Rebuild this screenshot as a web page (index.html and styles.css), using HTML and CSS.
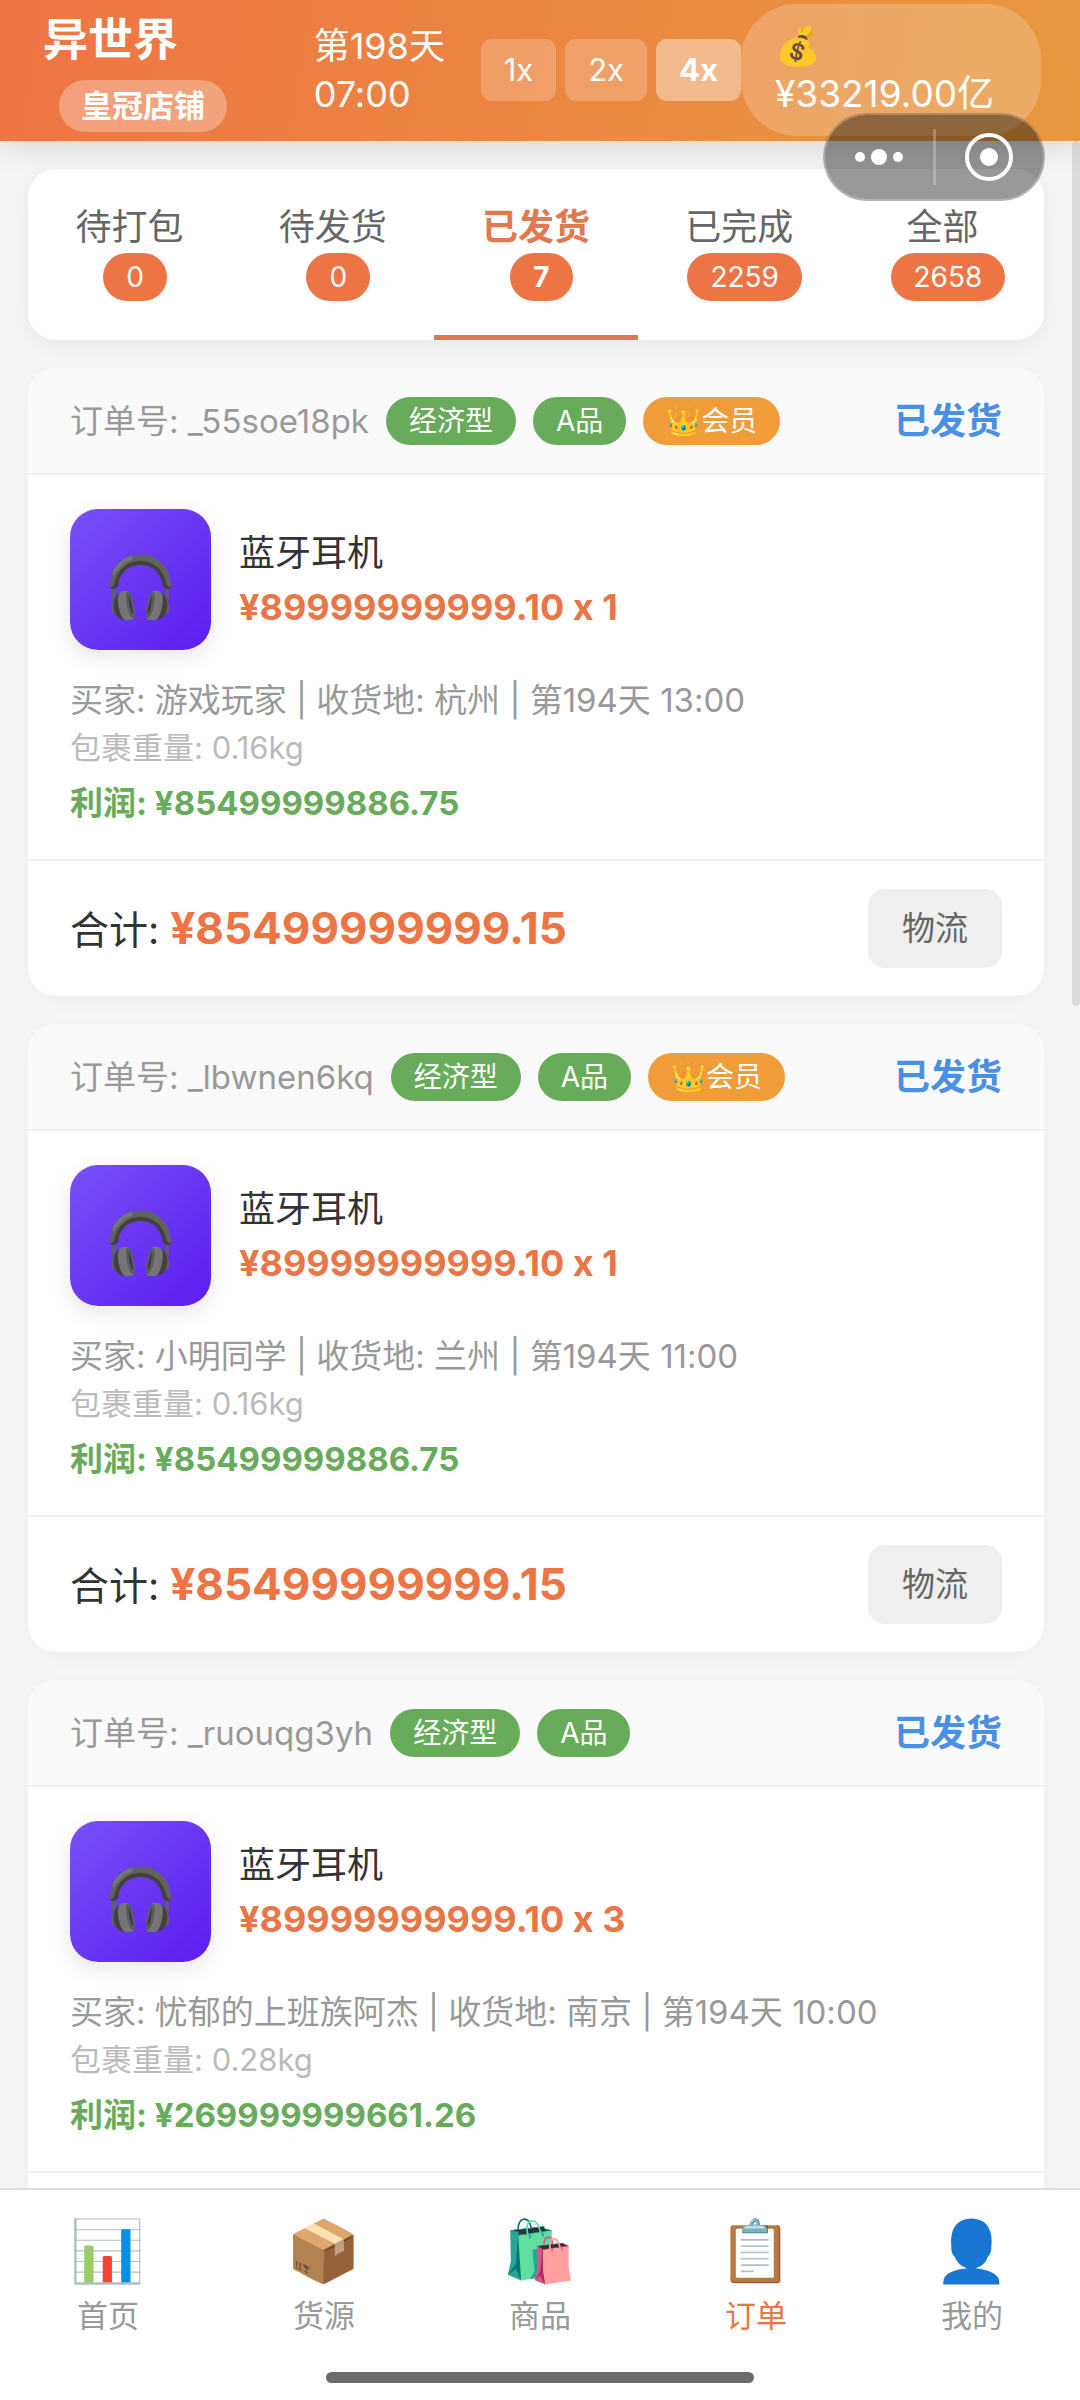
FILE: index.html
```html
<!DOCTYPE html>
<html lang="zh-CN" class="page">
<head>
  <meta charset="UTF-8">
  <title>异世界 - 订单</title>
  <meta name="viewport" content="width=device-width,initial-scale=1.0">
  <link rel="stylesheet" href="styles.css">
</head>
<body class="page__body">
  <header class="header">
    <div class="header__shop">
      <h1 class="header__title">异世界</h1>
      <span class="header__level">皇冠店铺</span>
    </div>
    <div class="header__time">第198天<br>07:00</div>
    <div class="speed">
      <button class="speed__button" type="button">1x</button>
      <button class="speed__button" type="button">2x</button>
      <button class="speed__button speed__button--active" type="button">4x</button>
    </div>
    <div class="money"><span class="money__icon">💰</span>¥33219.00亿</div>
  </header>

  <div class="capsule">
    <button class="capsule__button" type="button" aria-label="更多">
      <svg width="56" height="56" viewBox="0 0 56 56" fill="#fff"><circle cx="9" cy="28" r="5"/><circle cx="28" cy="28" r="8"/><circle cx="47" cy="28" r="5"/></svg>
    </button>
    <button class="capsule__button" type="button" aria-label="关闭">
      <svg width="56" height="56" viewBox="0 0 56 56"><circle cx="28" cy="28" r="22" fill="none" stroke="#fff" stroke-width="4"/><circle cx="28" cy="28" r="9" fill="#fff"/></svg>
    </button>
  </div>

  <main class="content">
    <nav class="tabs">
      <button class="tabs__item" type="button">待打包<span class="tabs__count">0</span></button>
      <button class="tabs__item" type="button">待发货<span class="tabs__count">0</span></button>
      <button class="tabs__item tabs__item--active" type="button">已发货<span class="tabs__count">7</span></button>
      <button class="tabs__item" type="button">已完成<span class="tabs__count">2259</span></button>
      <button class="tabs__item" type="button">全部<span class="tabs__count">2658</span></button>
    </nav>

    <article class="order">
      <div class="order__head">
        <span class="order__id">订单号: _55soe18pk</span>
        <span class="tag">经济型</span>
        <span class="tag">A品</span>
        <span class="tag tag--vip">👑会员</span>
        <span class="order__status">已发货</span>
      </div>
      <div class="order__body">
        <div class="product">
          <div class="product__image">🎧</div>
          <div class="product__info">
            <h2 class="product__name">蓝牙耳机</h2>
            <p class="product__price">¥89999999999.10 x 1</p>
          </div>
        </div>
        <p class="order__buyer">买家: 游戏玩家 | 收货地: 杭州 | 第194天 13:00</p>
        <p class="order__weight">包裹重量: 0.16kg</p>
        <p class="order__profit">利润: ¥85499999886.75</p>
      </div>
      <div class="order__foot">
        <p class="order__total">合计: <strong class="order__sum">¥85499999999.15</strong></p>
        <button class="order__button" type="button">物流</button>
      </div>
    </article>

    <article class="order">
      <div class="order__head">
        <span class="order__id">订单号: _lbwnen6kq</span>
        <span class="tag">经济型</span>
        <span class="tag">A品</span>
        <span class="tag tag--vip">👑会员</span>
        <span class="order__status">已发货</span>
      </div>
      <div class="order__body">
        <div class="product">
          <div class="product__image">🎧</div>
          <div class="product__info">
            <h2 class="product__name">蓝牙耳机</h2>
            <p class="product__price">¥89999999999.10 x 1</p>
          </div>
        </div>
        <p class="order__buyer">买家: 小明同学 | 收货地: 兰州 | 第194天 11:00</p>
        <p class="order__weight">包裹重量: 0.16kg</p>
        <p class="order__profit">利润: ¥85499999886.75</p>
      </div>
      <div class="order__foot">
        <p class="order__total">合计: <strong class="order__sum">¥85499999999.15</strong></p>
        <button class="order__button" type="button">物流</button>
      </div>
    </article>

    <article class="order">
      <div class="order__head">
        <span class="order__id">订单号: _ruouqg3yh</span>
        <span class="tag">经济型</span>
        <span class="tag">A品</span>
        <span class="order__status">已发货</span>
      </div>
      <div class="order__body">
        <div class="product">
          <div class="product__image">🎧</div>
          <div class="product__info">
            <h2 class="product__name">蓝牙耳机</h2>
            <p class="product__price">¥89999999999.10 x 3</p>
          </div>
        </div>
        <p class="order__buyer">买家: 忧郁的上班族阿杰 | 收货地: 南京 | 第194天 10:00</p>
        <p class="order__weight">包裹重量: 0.28kg</p>
        <p class="order__profit">利润: ¥269999999661.26</p>
      </div>
      <div class="order__foot"></div>
    </article>
    <div class="content__scrollbar"></div>
  </main>

  <nav class="menu">
    <a class="menu__item" href="#home"><span class="menu__icon">📊</span>首页</a>
    <a class="menu__item" href="#source"><span class="menu__icon">📦</span>货源</a>
    <a class="menu__item" href="#goods"><span class="menu__icon">🛍️</span>商品</a>
    <a class="menu__item menu__item--active" href="#orders"><span class="menu__icon">📋</span>订单</a>
    <a class="menu__item" href="#me"><span class="menu__icon">👤</span>我的</a>
  </nav>
</body>
</html>
```

FILE: styles.css
```css
*, *::before, *::after {
  box-sizing: border-box;
}

.page__body {
  position: relative;
  display: flex;
  flex-direction: column;
  height: 100vh;
  margin: 0;
  overflow: hidden;
  font-family: Inter, "Noto Sans CJK SC", "Noto Color Emoji", sans-serif;
  font-size: 33px;
  line-height: 48px;
  /* keeps "10 x 1" from turning into a multiplication sign */
  font-variant-ligatures: no-contextual;
  color: #333;
  background: #f4f4f4;
}

button {
  margin: 0;
  border: 0;
  font: inherit;
  color: inherit;
  cursor: pointer;
}

h1, h2, p {
  margin: 0;
}

.header {
  position: relative;
  z-index: 1;
  flex: none;
  display: flex;
  align-items: center;
  padding: 4px 39px 5px 43px;
  color: #fff;
  background: linear-gradient(100deg, #ef7445, #e7993e);
  box-shadow: 0 6px 28px rgba(0, 0, 0, 0.12);
}

.header__shop {
  flex: 1;
}

.header__title {
  margin-bottom: 8px;
  font-size: 45px;
  line-height: 64px;
}

.header__level {
  display: block;
  width: max-content;
  margin-left: 16px;
  padding: 0 22px;
  border-radius: 28px;
  font-size: 31px;
  font-weight: 700;
  line-height: 52px;
  background: rgba(255, 255, 255, 0.3);
}

.header__time {
  width: 167px;
  font-size: 36px;
}

.speed {
  display: flex;
  gap: 9px;
}

.speed__button {
  padding: 0 23px;
  border-radius: 11px;
  font-size: 31px;
  line-height: 62px;
  background: rgba(255, 255, 255, 0.2);
}

.speed__button--active {
  font-weight: 700;
  background: rgba(255, 255, 255, 0.4);
}

.money {
  width: 300px;
  padding: 18px 34px;
  border-radius: 56px;
  font-size: 37px;
  background: rgba(255, 255, 255, 0.2);
}

.money__icon {
  display: block;
}

/* mini program capsule, floats over the page */
.capsule {
  position: absolute;
  z-index: 2;
  top: 113px;
  right: 35px;
  display: flex;
  align-items: center;
  width: 222px;
  height: 88px;
  border: 2px solid rgba(255, 255, 255, 0.25);
  border-radius: 44px;
  background: rgba(0, 0, 0, 0.4);
}

.capsule__button {
  flex: 1;
  display: flex;
  justify-content: center;
  padding: 0;
  background: none;
}

.capsule__button + .capsule__button {
  border-left: 3px solid rgba(255, 255, 255, 0.25);
}

.content {
  position: relative;
  flex: 1;
  min-height: 0;
  padding: 28px 36px 0 28px;
  overflow: hidden;
}

.content__scrollbar {
  position: absolute;
  top: 0;
  right: 0;
  width: 8px;
  height: 865px;
  border-radius: 4px;
  background: #dcdcdc;
}

.tabs {
  display: flex;
  margin-bottom: 28px;
  border-radius: 28px;
  overflow: hidden;
  background: #fff;
  box-shadow: 0 6px 22px rgba(0, 0, 0, 0.05);
}

.tabs__item {
  flex: 1;
  display: flex;
  flex-direction: column;
  align-items: center;
  padding: 34px 0;
  border-bottom: 5px solid transparent;
  font-size: 36px;
  color: #666;
  background: none;
}

.tabs__item--active {
  border-color: #e2784f;
  font-weight: 700;
  color: #e2784f;
}

.tabs__count {
  margin-top: 2px;
  margin-left: 11px;
  padding: 0 23px;
  border-radius: 24px;
  font-size: 28px;
  color: #fff;
  background: #ed7445;
}

.order {
  margin-bottom: 28px;
  border-radius: 28px;
  overflow: hidden;
  background: #fff;
  box-shadow: 0 6px 22px rgba(0, 0, 0, 0.02);
}

.order__head {
  display: flex;
  align-items: center;
  gap: 17px;
  height: 107px;
  padding: 0 42px;
  border-bottom: 2px solid #efefef;
  background: #fafafa;
}

.order__id {
  color: #999;
}

.tag {
  padding: 0 23px;
  border-radius: 24px;
  font-size: 28px;
  color: #fff;
  background: #67ab5b;
}

.tag--vip {
  background: #f09c38;
}

.order__status {
  margin-left: auto;
  font-size: 36px;
  font-weight: 700;
  color: #4a90e2;
}

.order__body {
  padding: 34px 42px 32px;
}

.product {
  display: flex;
  align-items: center;
  gap: 28px;
  margin-bottom: 26px;
}

.product__image {
  display: flex;
  align-items: center;
  justify-content: center;
  width: 141px;
  height: 141px;
  padding-top: 12px;
  border-radius: 28px;
  font-size: 60px;
  background: linear-gradient(135deg, #7850f8, #5b1ef0);
  box-shadow: 0 6px 22px rgba(0, 0, 0, 0.1);
}

.product__name {
  font-size: 36px;
  font-weight: 400;
  line-height: 54px;
}

.product__price {
  font-size: 36px;
  font-weight: 700;
  line-height: 54px;
  color: #e87647;
}

.order__buyer {
  color: #999;
}

.order__weight {
  font-size: 31px;
  color: #bbb;
}

.order__profit {
  margin-top: 7px;
  font-weight: 700;
  color: #67ab5b;
}

.order__foot {
  display: flex;
  align-items: center;
  justify-content: space-between;
  min-height: 137px;
  padding: 0 42px;
  border-top: 2px solid #efefef;
}

.order__total {
  font-size: 39px;
}

.order__sum {
  font-size: 44px;
  color: #ed7445;
}

.order__button {
  padding: 0 34px;
  border-radius: 17px;
  line-height: 79px;
  color: #666;
  background: #efefef;
}

.menu {
  position: relative;
  flex: none;
  display: flex;
  height: 212px;
  border-top: 2px solid #ddd;
  background: #fff;
}

/* home indicator */
.menu::after {
  content: "";
  position: absolute;
  bottom: 17px;
  left: 50%;
  width: 428px;
  height: 11px;
  margin-left: -214px;
  border-radius: 6px;
  background: #6b6b6b;
}

.menu__item {
  flex: 1;
  padding-top: 26px;
  font-size: 31px;
  text-align: center;
  text-decoration: none;
  color: #999;
}

.menu__item--active {
  color: #ed7445;
}

.menu__icon {
  display: block;
  margin-bottom: 8px;
  font-size: 60px;
  line-height: 68px;
}
```
